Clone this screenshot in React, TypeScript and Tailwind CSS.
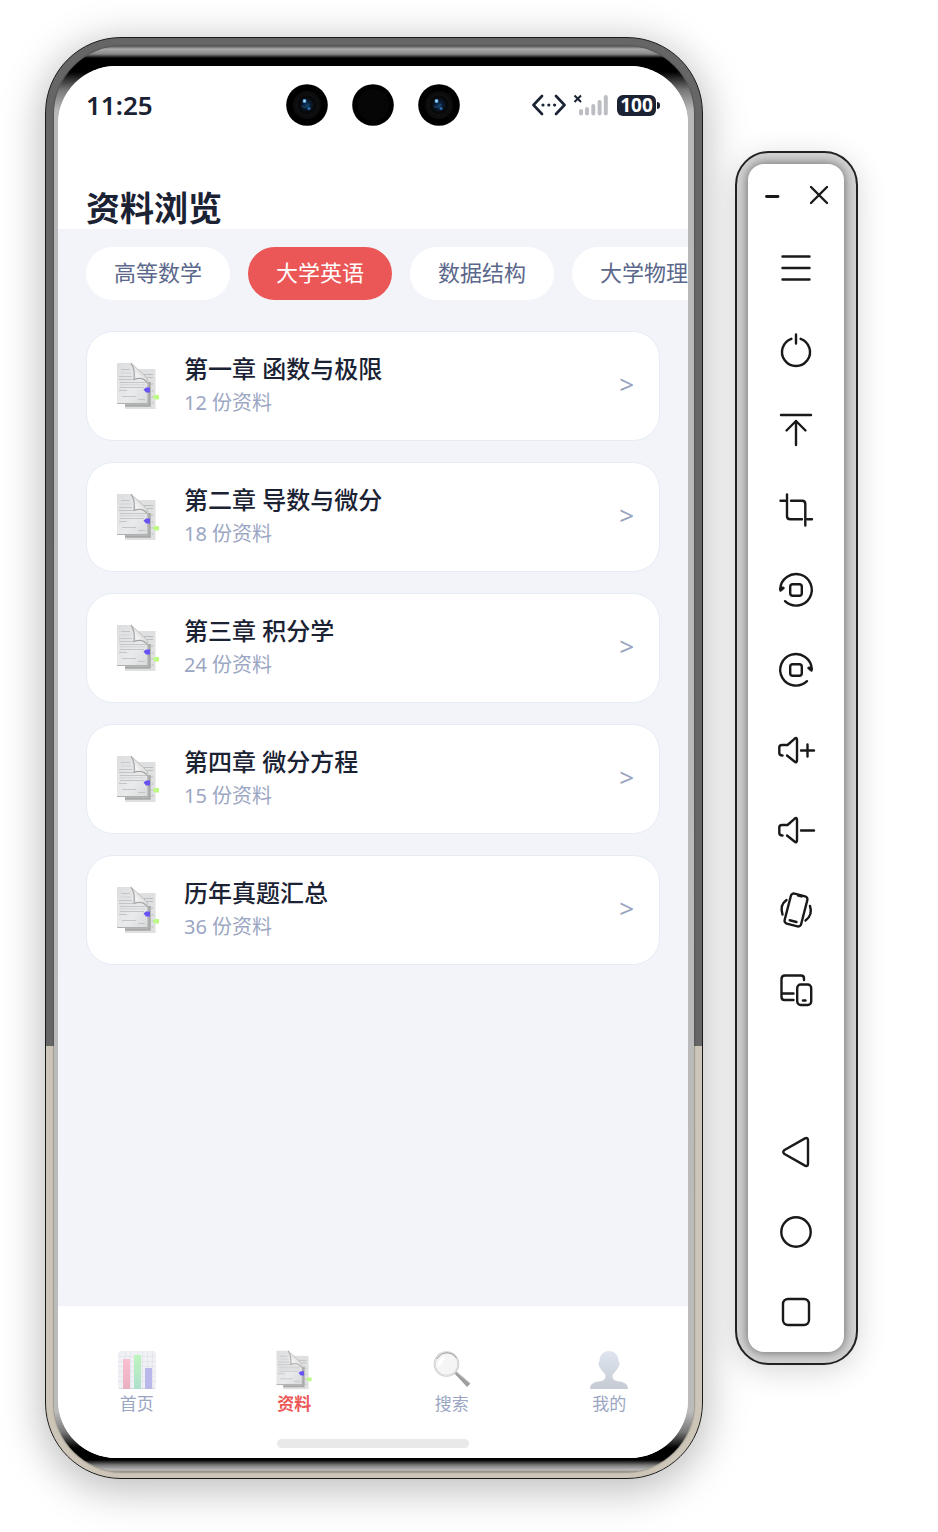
import { useState, type ReactNode } from 'react';

const subjects = ['高等数学', '大学英语', '数据结构', '大学物理'];

const chapters = [
    { title: '第一章 函数与极限', count: 12 },
    { title: '第二章 导数与微分', count: 18 },
    { title: '第三章 积分学', count: 24 },
    { title: '第四章 微分方程', count: 15 },
    { title: '历年真题汇总', count: 36 },
];

function DocumentIcon({ className }: { className: string }) {
    return (
        <svg viewBox="0 0 44 48" className={className} aria-hidden="true">
            <defs>
                <linearGradient id="sheet" x1="0" y1="0" x2="1" y2="1">
                    <stop offset="0" stopColor="#dcddde" />
                    <stop offset="0.6" stopColor="#e9eaeb" />
                    <stop offset="1" stopColor="#d8d9da" />
                </linearGradient>
                <linearGradient id="fold" x1="0" y1="1" x2="0.7" y2="0.3">
                    <stop offset="0" stopColor="#b4b4b4" />
                    <stop offset="0.5" stopColor="#f4f4f4" />
                    <stop offset="1" stopColor="#d2d2d2" />
                </linearGradient>
            </defs>
            <path d="M9 7H39.500V47H9Z" fill="#dfe0e1" />
            <path d="M9 43.500H33.500V20" fill="none" stroke="#9a9a9a" strokeWidth="2.500" opacity="0.800" />
            <path d="M28 12.500H37M31 15.500H37M34 22H37M35.500 29H37.500M35.500 35H37.500M35.500 41H37.500" stroke="#b4b4b4" strokeWidth="0.800" />
            <path d="M1 1H15L32 19V42H1Z" fill="url(#sheet)" />
            <path d="M32 20V41.500H1" fill="none" stroke="#b0b0b0" strokeWidth="1.200" />
            <path d="M5 7.500H14M3 14.500H16M3 17.500H17M4 20.500H30M4 25.500H28M3 28.500H11M6 34.500H20M22 37.500H29" stroke="#c0c1c2" strokeWidth="0.900" />
            <path d="M5 11H15M4 22.800H29" stroke="#cfd0d1" strokeWidth="0.900" />
            <path d="M15 1Q19.500 8 18 17.500Q27 14 32 21.500Q33 17.500 28 13Z" fill="url(#fold)" />
            <path d="M15 1Q19.500 8 18 17.500Q27 14 32 21.500" fill="none" stroke="#a5a5a5" strokeWidth="1.200" />
            <path d="M15 1L28 13Q31.500 16 32 19.500" fill="none" stroke="#b5b5b5" strokeWidth="0.800" />
            <path d="M27.500 27.500L30 25.500H34V30.500H30Z" fill="#6753f5" />
            <path d="M36.500 35L39 33H43V37.500H39Z" fill="#bdfa84" />
        </svg>
    );
}

function ChartIcon() {
    return (
        <svg viewBox="0 0 40 40" className="h-10 w-10" aria-hidden="true">
            <defs>
                <linearGradient id="green" x1="0" y1="0" x2="0" y2="1">
                    <stop offset="0" stopColor="#bdf5bd" />
                    <stop offset="1" stopColor="#b0dfce" />
                </linearGradient>
                <linearGradient id="pink" x1="0" y1="0" x2="0" y2="1">
                    <stop offset="0" stopColor="#f9bfd2" />
                    <stop offset="1" stopColor="#ebb0c0" />
                </linearGradient>
            </defs>
            <rect x="1" y="1" width="38" height="38" rx="3" fill="#f0f1f5" />
            <path d="M1 6.500H39M1 11.500H39M1 16.500H39M1 21.500H39M1 26.500H39M1 31.500H39M8.500 1V39M13.500 1V39M20.500 1V39M25.500 1V39M30.500 1V39M35.500 1V39" stroke="#dfe2e9" strokeWidth="0.700" />
            <path d="M2 38.500H38" stroke="#d5d7df" strokeWidth="1" />
            <rect x="6" y="9" width="7" height="30" fill="url(#pink)" />
            <rect x="17" y="5" width="7" height="34" fill="url(#green)" />
            <rect x="28" y="18" width="7" height="21" fill="#b9b8ea" />
        </svg>
    );
}

function MagnifierIcon() {
    return (
        <svg viewBox="0 0 40 40" className="h-10 w-10" aria-hidden="true">
            <path d="M22 22L26 25" stroke="#b5b5b5" strokeWidth="2.500" />
            <path d="M24.500 21.500L38.500 33.500L35 37L23.500 24.500Z" fill="#9e9e9e" />
            <path d="M24.500 22L38 33.500" stroke="#c5c5c5" strokeWidth="1" />
            <circle cx="14.500" cy="14" r="11.800" fill="#f5f5f5" stroke="#c9c9c9" strokeWidth="2" />
            <circle cx="14.500" cy="14" r="11.800" fill="none" stroke="#eee" strokeWidth="0.800" />
            <path d="M5 9Q9 2.800 15 2.800Q21 3 24.500 8" fill="none" stroke="#999" strokeWidth="0.900" />
            <path d="M5 18Q11 14 13 6Q6 8 5 18" fill="#fff" />
        </svg>
    );
}

function PersonIcon() {
    return (
        <svg viewBox="0 0 40 40" className="h-10 w-10" aria-hidden="true">
            <defs>
                <linearGradient id="person" x1="0" y1="0" x2="0" y2="1">
                    <stop offset="0" stopColor="#dfe6ef" />
                    <stop offset="1" stopColor="#c5cad3" />
                </linearGradient>
            </defs>
            <path d="M20 1C14 1 10.500 5.500 10.500 11Q8.500 13 10 16Q11 18 12.500 20L16.500 25Q17 30 12.500 31C5 32 1.500 33 1 39H39C38.500 33 35 32 27.500 31Q23 30 23.500 25L27.500 20Q29 18 30 16Q31.500 13 29.500 11C29.500 5.500 26 1 20 1Z" fill="url(#person)" />
        </svg>
    );
}

const tabs = [
    { label: '首页', icon: <ChartIcon /> },
    { label: '资料', icon: <DocumentIcon className="h-10 w-10" /> },
    { label: '搜索', icon: <MagnifierIcon /> },
    { label: '我的', icon: <PersonIcon /> },
];

function CameraLens({ glass = true }: { glass?: boolean }) {
    return (
        <svg viewBox="0 0 42 42" className="h-[42px] w-[42px]" aria-hidden="true">
            <defs>
                <radialGradient id="lens">
                    <stop offset="0" stopColor="#123a63" />
                    <stop offset="0.600" stopColor="#0a1a2e" />
                    <stop offset="1" stopColor="#0b0c0f" />
                </radialGradient>
            </defs>
            <circle cx="21" cy="21" r="20.800" fill="#000" />
            {glass ? (
                <>
                    <circle cx="21" cy="21" r="14" fill="#0c0c0d" />
                    <circle cx="21" cy="21" r="10.500" fill="#08090b" stroke="#141518" strokeWidth="1" />
                    <circle cx="21" cy="21" r="7" fill="url(#lens)" />
                    <path d="M16 22Q21 25 23 20" fill="none" stroke="#22588c" strokeWidth="1.500" opacity="0.500" />
                    <circle cx="18.500" cy="17" r="1.900" fill="#5da9e8" />
                    <circle cx="18.500" cy="17" r="0.900" fill="#b9e0ff" />
                    <circle cx="23" cy="24.500" r="1.500" fill="#2d6cae" />
                </>
            ) : (
                <circle cx="21" cy="21" r="16" fill="#060606" />
            )}
        </svg>
    );
}

function StatusIcons() {
    return (
        <div className="flex items-center text-[#1a2233]">
            <svg viewBox="0 0 76 22" className="mr-[9px] h-[22px] w-[76px]" aria-hidden="true">
                <path d="M10 2L1.500 11L10 20M24 2L32.500 11L24 20" fill="none" stroke="currentColor" strokeWidth="2.600" strokeLinecap="round" strokeLinejoin="round" />
                <circle cx="11" cy="11" r="1.600" fill="currentColor" />
                <circle cx="16.800" cy="11" r="1.600" fill="currentColor" />
                <circle cx="22.600" cy="11" r="1.600" fill="currentColor" />
                <path d="M42.500 1.500L49 8M49 1.500L42.500 8" stroke="currentColor" strokeWidth="2" />
                <path d="M49 17V19.500M55 15V19.500M61.300 12V19.500M67.600 8V19.500M73.800 3V19.500" stroke="#bcbec3" strokeWidth="4" strokeLinecap="round" />
            </svg>
            <span className="flex h-[21px] w-[39px] items-center justify-center rounded-md bg-[#1a2233] text-[19px] leading-none font-bold text-white">
                100
            </span>
            <span className="ml-px h-[7px] w-[3px] rounded-r-full bg-[#1a2233]" />
        </div>
    );
}

function Phone() {
    const [subject, setSubject] = useState('大学英语');
    const [tab, setTab] = useState('资料');

    return (
        <main className="flex min-w-0 flex-1 flex-col rounded-[76px] border border-[#1b1b1b] bg-[linear-gradient(to_bottom,#666_0,#666_70%,#cdc6b8_70%,#cdc6b8_100%)] pt-2 pr-2 pb-1.5 pl-2 shadow-[0_8px_40px_4px_rgba(0,0,0,0.26)]">
            <div className="flex flex-1 flex-col rounded-[68px] bg-[linear-gradient(to_bottom,#555_0,#aaa_3px,#888_8px,#000_12px,#000_26px,#777_44px,#b8b8b8_64px,#bbb_calc(100%-60px),#777_calc(100%-40px),#000_calc(100%-24px),#000_calc(100%-12px),#777_calc(100%-7px),#bbb_calc(100%-2px),#8f8778_100%)] pt-5 pr-1.5 pb-[14px] pl-1 shadow-[0_0_2px_#333]">
                <div className="relative flex flex-1 flex-col overflow-hidden rounded-[58px] bg-[#f3f4fa]">
                    <header className="bg-white px-7">
                        <div className="flex h-[78px] items-center justify-between">
                            <time className="text-[26px] leading-none font-semibold text-[#1a2233]">11:25</time>
                            <StatusIcons />
                        </div>
                        <h1 className="pt-11 text-[34px] leading-[41px] font-bold text-[#1a2233]">资料浏览</h1>
                    </header>
                    <div className="absolute top-[18px] left-1/2 flex -translate-x-1/2 gap-6">
                        <CameraLens />
                        <CameraLens glass={false} />
                        <CameraLens />
                    </div>

                    <div className="flex gap-[18px] overflow-hidden px-7 pt-[18px]">
                        {subjects.map((name) => (
                            <button
                                key={name}
                                type="button"
                                aria-pressed={name === subject}
                                onClick={() => setSubject(name)}
                                className={`h-[53px] shrink-0 rounded-full px-7 pb-1 text-[22px] leading-none ${
                                    name === subject ? 'bg-[#eb5757] text-white' : 'bg-white text-[#5b678b]'
                                }`}
                            >
                                {name}
                            </button>
                        ))}
                    </div>

                    <ul className="flex flex-1 flex-col gap-[21px] px-7 pt-[31px] pb-8">
                        {chapters.map(({ title, count }) => (
                            <li key={title}>
                                <button
                                    type="button"
                                    className="flex h-[110px] w-full items-center rounded-[27px] border border-[#e6ebf6] bg-white px-[29px] text-left"
                                >
                                    <DocumentIcon className="h-12 w-11 shrink-0" />
                                    <span className="ml-6 flex flex-1 flex-col gap-0.5">
                                        <span className="text-[24px] leading-8 font-medium text-[#1a2233]">{title}</span>
                                        <span className="text-[20px] leading-8 text-[#9ba6c3]">{count} 份资料</span>
                                    </span>
                                    <span className="-mr-1 pb-1 text-[26px] leading-8 text-[#98a3c0]">&gt;</span>
                                </button>
                            </li>
                        ))}
                    </ul>

                    <nav className="bg-white pt-11 pb-[10px]">
                        <div className="flex">
                            {tabs.map(({ label, icon }) => (
                                <button
                                    key={label}
                                    type="button"
                                    onClick={() => setTab(label)}
                                    className={`flex flex-1 flex-col items-center text-[17px] leading-7 ${
                                        label === tab ? 'font-bold text-[#eb5757]' : 'text-[#9ba6c3]'
                                    }`}
                                >
                                    {icon}
                                    {label}
                                </button>
                            ))}
                        </div>
                        <div className="mx-auto mt-[21px] h-[9px] w-48 rounded-full bg-[#e9e9e9]" />
                    </nav>
                </div>
            </div>
        </main>
    );
}

function ToolButton({ label, className = 'h-20', children }: { label: string; className?: string; children: ReactNode }) {
    return (
        <button type="button" aria-label={label} className={`flex items-center justify-center ${className}`}>
            <svg
                viewBox="0 0 48 48"
                className="h-12 w-12"
                fill="none"
                stroke="#191919"
                strokeWidth="2.400"
                strokeLinecap="round"
                strokeLinejoin="round"
                aria-hidden="true"
            >
                {children}
            </svg>
        </button>
    );
}

function Toolbar() {
    return (
        <aside className="mt-[114px] shrink-0 self-start rounded-[34px] border-2 border-[#222] bg-[#d3d3d3] py-[11px] pr-3 pl-[11px] shadow-[0_6px_30px_rgba(0,0,0,0.16)]">
            <div className="flex w-24 flex-col rounded-2xl bg-white shadow-[0_0_12px_rgba(0,0,0,0.55)]">
                <div className="flex h-[66px]">
                    <ToolButton label="最小化" className="w-12">
                        <path d="M18.500 23.500H30" strokeWidth="2.800" />
                    </ToolButton>
                    <ToolButton label="关闭" className="w-12">
                        <path d="M15 14L31 30M31 14L15 30" />
                    </ToolButton>
                </div>
                <ToolButton label="菜单">
                    <path d="M10.500 10.500H37.500M10.500 22H37.500M10.500 33.500H37.500" />
                </ToolButton>
                <ToolButton label="电源">
                    <path d="M19.400 12.800A14 14 0 1 0 28.600 12.800M24 8.500V17.500" />
                </ToolButton>
                <ToolButton label="上滑">
                    <path d="M9 9H39M24 15V39M14.500 24.500L24 15L33.500 24.500" />
                </ToolButton>
                <ToolButton label="截屏">
                    <path d="M8.500 14.800H13M15 8.500V30Q15 33.300 18.300 33.300H30M19 14.800H30Q33.300 14.800 33.300 18V39.500M35.500 33.300H40" />
                </ToolButton>
                <ToolButton label="向左旋转">
                    <path d="M8.200 23A15.800 15.800 0 1 1 13 35.200" />
                    <path d="M8.500 24.500L9 21.500L11.500 22Z" fill="#191919" />
                    <rect x="18.200" y="18.200" width="11.600" height="11.600" rx="2.500" />
                </ToolButton>
                <ToolButton label="向右旋转">
                    <path d="M39.800 23A15.800 15.800 0 1 0 35 35.200" />
                    <path d="M39.500 24.500L39 21.500L36.500 22Z" fill="#191919" />
                    <rect x="18.200" y="18.200" width="11.600" height="11.600" rx="2.500" />
                </ToolButton>
                <ToolButton label="音量加">
                    <path d="M10.500 29.500Q7.300 29.500 7.300 27V21.500Q7.300 19 10 19H15.500L22.500 12.800Q25 10.800 25 14V34Q25 37.500 22.500 35.500L15 29.500M29 24.500H42M35.500 18.500V30.500" />
                </ToolButton>
                <ToolButton label="音量减">
                    <path d="M10.500 29.500Q7.300 29.500 7.300 27V21.500Q7.300 19 10 19H15.500L22.500 12.800Q25 10.800 25 14V34Q25 37.500 22.500 35.500L15 29.500M29 24.500H42" />
                </ToolButton>
                <ToolButton label="摇一摇">
                    <g transform="rotate(14.500 24 24)">
                        <rect x="15.500" y="8.500" width="17" height="31" rx="3" />
                        <path d="M22.500 9.500H26M20.500 35.500H27.500" />
                    </g>
                    <path d="M14.500 14Q7.500 19 10.500 28.500M38 20Q41 29 33.500 34.500" />
                </ToolButton>
                <ToolButton label="多设备">
                    <path d="M32 14V12.500Q32 9.500 29 9.500H13Q9.500 9.500 9.500 13V31Q9.500 34 12.500 34H21.500M9.500 27.500H21.500" />
                    <rect x="25.200" y="18.500" width="14" height="20.500" rx="3.500" />
                    <path d="M31 34.500H33.500" />
                </ToolButton>
                <ToolButton label="返回" className="mt-[82px] h-20">
                    <path d="M12.500 22L33 10.400Q36 9 36 12.500V35.500Q36 39 33 37.600L12.500 26Q10 24 12.500 22Z" />
                </ToolButton>
                <ToolButton label="主屏幕">
                    <circle cx="24" cy="24" r="14.700" />
                </ToolButton>
                <ToolButton label="最近任务">
                    <rect x="11" y="11" width="26" height="26" rx="5" />
                </ToolButton>
            </div>
        </aside>
    );
}

export default function App() {
    return (
        <div className="flex min-h-screen gap-8 bg-white pt-[37px] pr-20 pb-[53px] pl-[45px] font-['Noto_Sans','Noto_Sans_CJK_SC',sans-serif]">
            <Phone />
            <Toolbar />
        </div>
    );
}
